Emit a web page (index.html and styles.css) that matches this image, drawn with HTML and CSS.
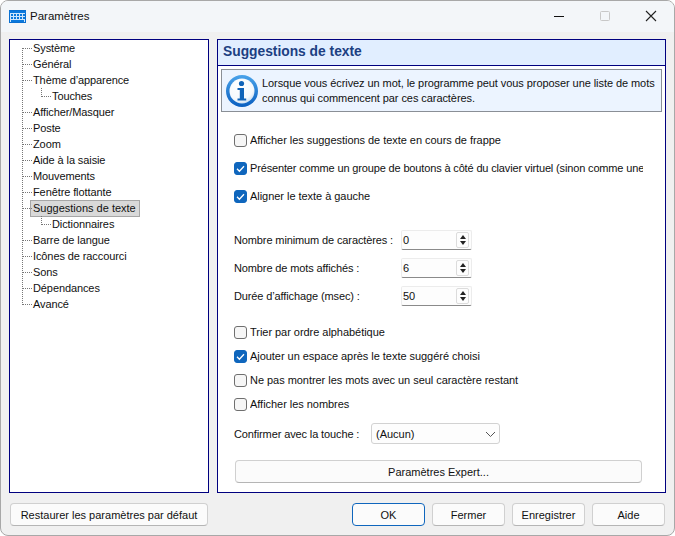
FILE: index.html
```
<!DOCTYPE html>
<html lang="fr">
<head>
<meta charset="utf-8">
<title>Paramètres</title>
<link rel="stylesheet" href="styles.css">
</head>
<body>
<div class="window">
  <header class="titlebar">
    <svg class="app-icon" width="17" height="13" viewBox="0 0 17 13">
      <rect x="0.5" y="0.5" width="16" height="12" fill="#cfe6fb" stroke="#0a6fd0"/>
      <path d="M0 1h17v2H0zM2 4h2v2H2zM5 4h2v2H5zM8 4h2v2H8zM11 4h2v2h-2zM14 4h2v2h-2zM2 7h2v2H2zM5 7h2v2H5zM8 7h2v2H8zM11 7h2v2h-2zM14 7h2v2h-2zM2 10h13v2H2z" fill="#0a78dc"/>
    </svg>
    <span class="title">Paramètres</span>
    <div class="caption">
      <svg width="46" height="31" viewBox="0 0 46 31"><path d="M18 15.5h10" stroke="#111" stroke-width="1"/></svg>
      <svg width="46" height="31" viewBox="0 0 46 31"><rect x="18.5" y="10.5" width="9" height="9" rx="1" fill="none" stroke="#c8c8c8"/></svg>
      <svg width="46" height="31" viewBox="0 0 46 31"><path d="M18 10l10 10M28 10L18 20" stroke="#222" stroke-width="1.1" fill="none"/></svg>
    </div>
  </header>
  <main class="main">
    <nav class="tree">
      <div class="row">Système</div>
      <div class="row">Général</div>
      <div class="row">Thème d’apparence</div>
      <div class="row child">Touches</div>
      <div class="row">Afficher/Masquer</div>
      <div class="row">Poste</div>
      <div class="row">Zoom</div>
      <div class="row">Aide à la saisie</div>
      <div class="row">Mouvements</div>
      <div class="row">Fenêtre flottante</div>
      <div class="row"><span class="selected">Suggestions de texte</span></div>
      <div class="row child">Dictionnaires</div>
      <div class="row">Barre de langue</div>
      <div class="row">Icônes de raccourci</div>
      <div class="row">Sons</div>
      <div class="row">Dépendances</div>
      <div class="row last">Avancé</div>
    </nav>
    <section class="panel">
      <h1 class="panel-title">Suggestions de texte</h1>
      <div class="info">
        <svg class="info-icon" width="34" height="34" viewBox="0 0 34 34">
          <defs>
            <linearGradient id="ring" x1="0" y1="0" x2="0" y2="1">
              <stop offset="0" stop-color="#4aa3ea"/>
              <stop offset="1" stop-color="#0a5fc0"/>
            </linearGradient>
            <radialGradient id="face" cx="0.4" cy="0.3" r="0.8">
              <stop offset="0" stop-color="#ffffff"/>
              <stop offset="0.7" stop-color="#f4f8fc"/>
              <stop offset="1" stop-color="#bcd6ee"/>
            </radialGradient>
          </defs>
          <circle cx="17" cy="17" r="16" fill="url(#ring)"/>
          <circle cx="17" cy="17" r="12.5" fill="url(#face)"/>
          <circle cx="16.5" cy="9.5" r="2.6" fill="#0f63b8"/>
          <path d="M12.5 14h6.5v10.5h2.2v2H12.5v-2h2.3V16h-2.3z" fill="#0f63b8"/>
        </svg>
        <p class="info-text">Lorsque vous écrivez un mot, le programme peut vous proposer une liste de mots<br>connus qui commencent par ces caractères.</p>
      </div>
      <div class="options">
        <div class="group-a">
          <label class="check"><span class="box"></span><span class="clip">Afficher les suggestions de texte en cours de frappe</span></label>
          <label class="check"><span class="box on"><svg width="13" height="13" viewBox="0 0 13 13"><path d="M3 6.8l2.4 2.4L10 4.2" fill="none" stroke="#fff" stroke-width="1.3"/></svg></span><span class="clip tight">Présenter comme un groupe de boutons à côté du clavier virtuel (sinon comme une</span></label>
          <label class="check"><span class="box on"><svg width="13" height="13" viewBox="0 0 13 13"><path d="M3 6.8l2.4 2.4L10 4.2" fill="none" stroke="#fff" stroke-width="1.3"/></svg></span><span class="clip">Aligner le texte à gauche</span></label>
        </div>
        <div class="group-b">
          <div class="field"><span class="field-label">Nombre minimum de caractères :</span><div class="spin"><span>0</span><span class="arrows"><i class="up"></i><i class="down"></i></span></div></div>
          <div class="field"><span class="field-label">Nombre de mots affichés :</span><div class="spin"><span>6</span><span class="arrows"><i class="up"></i><i class="down"></i></span></div></div>
          <div class="field"><span class="field-label">Durée d’affichage (msec) :</span><div class="spin"><span>50</span><span class="arrows"><i class="up"></i><i class="down"></i></span></div></div>
        </div>
        <div class="group-c">
          <label class="check"><span class="box"></span><span class="clip">Trier par ordre alphabétique</span></label>
          <label class="check"><span class="box on"><svg width="13" height="13" viewBox="0 0 13 13"><path d="M3 6.8l2.4 2.4L10 4.2" fill="none" stroke="#fff" stroke-width="1.3"/></svg></span><span class="clip">Ajouter un espace après le texte suggéré choisi</span></label>
          <label class="check"><span class="box"></span><span class="clip">Ne pas montrer les mots avec un seul caractère restant</span></label>
          <label class="check"><span class="box"></span><span class="clip">Afficher les nombres</span></label>
        </div>
        <div class="confirm">
          <span class="confirm-label">Confirmer avec la touche :</span>
          <div class="combo"><span>(Aucun)</span><svg width="11" height="6" viewBox="0 0 11 6"><path d="M1 1l4.5 4.5L10 1" fill="none" stroke="#555"/></svg></div>
        </div>
        <button class="btn expert" type="button">Paramètres Expert...</button>
      </div>
    </section>
  </main>
  <footer class="footer">
    <button class="btn restore" type="button">Restaurer les paramètres par défaut</button>
    <div class="actions">
      <button class="btn action primary" type="button">OK</button>
      <button class="btn action" type="button">Fermer</button>
      <button class="btn action" type="button">Enregistrer</button>
      <button class="btn action" type="button">Aide</button>
    </div>
  </footer>
</div>
</body>
</html>
```
FILE: styles.css
```
* { box-sizing: border-box; }
html, body { margin: 0; padding: 0; background: #fff; }
body { font: 11px/16px "Liberation Sans", Arial, sans-serif; color: #111; }
.window {
  width: 675px; height: 536px; display: flex; flex-direction: column;
  background: #f0f0f0; border: 1px solid #a8a8a8;
  border-radius: 8px; overflow: hidden;
}
.titlebar { height: 31px; flex: none; display: flex; align-items: center; background: #f3f6f9; padding-left: 8px; }
.app-icon { flex: none; margin-top: -1px; }
.title { margin-left: 4px; font-size: 11.5px; margin-top: -1px; }
.caption { margin-left: auto; display: flex; }
.caption svg { display: block; }
.main { flex: none; height: 454px; margin-top: 7px; padding: 0 8px; display: flex; gap: 8px; }
.tree { position: relative; width: 200px; flex: none; border: 1px solid #00007f; background: #fff; letter-spacing: -0.1px; }
.tree::before { content: ""; position: absolute; left: 12px; top: 8px; height: 257px; border-left: 1px dotted #777; }
.row { height: 16px; padding-left: 23px; position: relative; white-space: nowrap; }
.row::before { content: ""; position: absolute; left: 13px; top: 8px; width: 9px; border-top: 1px dotted #777; }
.child { padding-left: 42px; }
.child::before { left: 32px; top: 8px; width: 9px; height: 0; }
.child::after { content: ""; position: absolute; left: 31px; top: 0; height: 9px; border-left: 1px dotted #777; }
.selected { display: inline-block; height: 17px; margin: -1px 0 0 -3px; padding: 0 3px 0 2px; background: #d9d9d9; border: 1px solid #a6a6a6; line-height: 15px; letter-spacing: 0; }
.panel { width: 449px; flex: none; border: 1px solid #00007f; background: #fff; display: flex; flex-direction: column; }
.panel-title { margin: 0; height: 26px; padding: 0 0 0 5px; background: #e1eeff; border-bottom: 1px solid #00007f; font: bold 13.8px/24px "Liberation Sans", sans-serif; color: #1c3f82; }
.info { margin: 3px 3px 0 3px; height: 43px; display: flex; align-items: center; background: #ecf4ff; border: 1px solid #8a8f96; }
.info-icon { flex: none; margin-left: 3px; }
.info-text { margin: 0 0 0 3px; line-height: 15px; white-space: nowrap; letter-spacing: -0.07px; }
.options { padding: 0 0 0 16px; }
.check { display: flex; align-items: center; height: 16px; }
.box { width: 13px; height: 13px; flex: none; border: 1px solid #6f6f6f; border-radius: 3px; background: #f6f6f6; margin-right: 3px; }
.box.on { background: #0f66bd; border-color: #0f66bd; }
.box svg { display: block; margin: -1px; }
.clip { width: 393px; overflow: hidden; white-space: nowrap; letter-spacing: -0.04px; }
.tight { letter-spacing: -0.15px; }
.group-a { margin-top: 20px; display: flex; flex-direction: column; gap: 12px; }
.group-b { margin-top: 26px; display: flex; flex-direction: column; gap: 8px; }
.field { display: flex; align-items: center; height: 20px; }
.field-label { width: 167px; flex: none; white-space: nowrap; letter-spacing: -0.12px; }
.spin { width: 71px; height: 20px; display: flex; align-items: center; justify-content: space-between; padding: 0 2px 0 1px; background: #fdfdfd; border: 1px solid #ececec; border-bottom-color: #8a8a8a; border-radius: 2px; }
.arrows { width: 13px; height: 16px; display: flex; flex-direction: column; border: 1px solid #dcdcdc; border-radius: 2px; align-items: center; justify-content: space-evenly; }
.up { width: 0; height: 0; border: 3.5px solid transparent; border-top: 0; border-bottom: 4px solid #222; }
.down { width: 0; height: 0; border: 3.5px solid transparent; border-bottom: 0; border-top: 4px solid #222; }
.group-c { margin-top: 18px; display: flex; flex-direction: column; gap: 8px; }
.confirm { margin-top: 11px; height: 21px; display: flex; align-items: center; }
.confirm-label { width: 137px; flex: none; white-space: nowrap; letter-spacing: -0.12px; }
.combo { width: 129px; height: 21px; display: flex; align-items: center; justify-content: space-between; padding: 0 3px 0 4px; background: #fdfdfd; border: 1px solid #d2d2d2; border-radius: 3px; }
.btn { height: 23px; padding: 0; font: inherit; color: #111; background: #fbfbfb; border: 1px solid #d0d0d0; border-bottom-color: #b5b5b5; border-radius: 4px; }
.expert { display: block; width: 407px; margin: 16px 0 0 1px; }
.footer { flex: none; display: flex; justify-content: space-between; padding: 10px 9px 0 9px; }
.restore { width: 198px; }
.actions { display: flex; gap: 7px; }
.action { width: 73px; }
.primary { border: 1px solid #0f66bd; }
```
